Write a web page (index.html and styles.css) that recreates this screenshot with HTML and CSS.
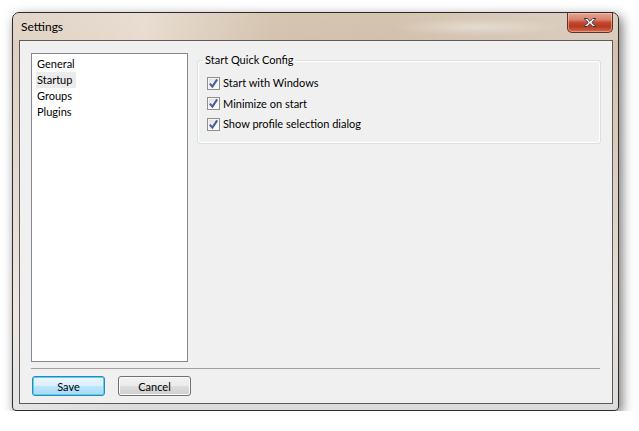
FILE: index.html
```html
<!DOCTYPE html>
<html>
<head>
<meta charset="utf-8">
<link rel="stylesheet" href="styles.css">
</head>
<body>
<div class="window">
  <div class="titlebar">
    <span class="title">Settings</span>
    <span class="wm-title" aria-hidden="true"></span>
    <button class="close" aria-label="Close">
      <svg width="16" height="11" viewBox="0 0 16 11"><path d="M2 1.5h3.2L8 4.3 10.8 1.5H14L9.8 5.5 14 9.5h-3.2L8 6.7 5.2 9.5H2l4.2-4z" fill="#fff" stroke="#3a3a44" stroke-width="1" stroke-linejoin="round"/></svg>
    </button>
  </div>
  <div class="client">
    <div class="main">
      <ul class="list">
        <li><span>General</span></li>
        <li class="sel"><span>Startup</span></li>
        <li><span>Groups</span></li>
        <li><span>Plugins</span></li>
      </ul>
      <div class="pane">
        <fieldset class="group">
          <legend>Start Quick Config</legend>
          <label class="check"><span class="box"><svg width="11" height="11" viewBox="0 0 11 11"><path d="M1.8 5.6l2.6 3L9.2 1.4" fill="none" stroke="#4a5d9c" stroke-width="2.1"/></svg></span>Start with Windows</label>
          <label class="check"><span class="box"><svg width="11" height="11" viewBox="0 0 11 11"><path d="M1.8 5.6l2.6 3L9.2 1.4" fill="none" stroke="#4a5d9c" stroke-width="2.1"/></svg></span>Minimize on start</label>
          <label class="check"><span class="box"><svg width="11" height="11" viewBox="0 0 11 11"><path d="M1.8 5.6l2.6 3L9.2 1.4" fill="none" stroke="#4a5d9c" stroke-width="2.1"/></svg></span>Show profile selection dialog</label>
        </fieldset>
      </div>
    </div>
    <div class="sep"></div>
    <div class="buttons">
      <button class="btn default">Save</button>
      <button class="btn">Cancel</button>
    </div>
  </div>
</div>
</body>
</html>
```
FILE: styles.css
```css
html, body {
  margin: 0;
  padding: 0;
  background: #ffffff;
}
body {
  padding: 12px 0 0 12px;
  font-family: "Lato", "Noto Sans", sans-serif;
  font-size: 11px;
  color: #000;
}
.window {
  position: relative;
  width: 605px;
  height: 397px;
  border: 1px solid #2e2b28;
  border-radius: 7px 7px 4px 4px;
  background:
    linear-gradient(to right, rgba(255,255,255,0.25) 0, rgba(255,255,255,0) 120px, rgba(255,255,255,0) 100%),
    linear-gradient(to bottom, #d6c6b4 0, #d3c1ac 30px, #d9cdbf 150px, #e4dfda 300px, #dcdcdc 100%);
  box-shadow: 3px 4px 12px rgba(0,0,0,0.55);
  display: flex;
  flex-direction: column;
}
.titlebar {
  position: relative;
  height: 27px;
  display: flex;
  align-items: flex-start;
  justify-content: space-between;
  padding: 0 5px 0 8px;
  background: linear-gradient(to right, rgba(225,215,203,0.5) 0, rgba(240,232,222,0.7) 130px, rgba(214,196,176,0.3) 260px, rgba(206,188,166,0.2) 380px, rgba(226,218,210,0.4) 560px);
  border-radius: 6px 6px 0 0;
}
.title {
  margin-top: 6px;
  font-size: 12px;
  line-height: 16px;
}
.wm-title {
  position: absolute;
  left: 380px;
  top: 5px;
  width: 170px;
  height: 18px;
  background: radial-gradient(ellipse at center, rgba(235,228,220,0.7) 0, rgba(235,228,220,0) 70%);
}
.close {
  position: relative;
  margin-top: -1px;
  width: 46px;
  height: 21px;
  padding: 0;
  border: 1px solid #5b3128;
  border-top-color: #3a2a24;
  border-radius: 0 0 5px 5px;
  background: linear-gradient(to bottom, #e7a595 0, #d8816d 35%, #c14a33 50%, #b9381f 70%, #d26a4d 100%);
  box-shadow: inset 0 0 0 1px rgba(255,220,210,0.45);
  display: flex;
  align-items: center;
  justify-content: center;
}
.client {
  margin: 0 5px 6px 6px;
  flex: 1;
  border: 1px solid #5f5a55;
  background: #f0f0f0;
  padding: 12px 11px 6px 11px;
  display: flex;
  flex-direction: column;
}
.main {
  display: flex;
  gap: 9px;
}
.list {
  margin: 0;
  padding: 2px 0 0 4px;
  list-style: none;
  width: 151px;
  height: 305px;
  border: 1px solid #828790;
  background: #fff;
}
.list li {
  height: 16px;
  line-height: 16px;
}
.list li span {
  display: inline-block;
  padding: 0 1px;
}
.list li.sel span {
  background: #ebebeb;
  padding-right: 4px;
}
.pane {
  position: relative;
  flex: 1;
}
.group {
  margin: 0;
  padding: 6px 0 8px 0;
  border: 1px solid #d5dfe5;
  border-radius: 3px;
  box-shadow: inset 0 0 0 1px #fff;
  width: 404px;
  box-sizing: border-box;
  min-width: 0;
}
.group legend {
  margin-left: 5px;
  padding: 0 2px;
  line-height: 14px;
  font-size: 11px;
}
.check {
  display: flex;
  align-items: center;
  height: 20.5px;
  line-height: 16px;
  margin-left: 9px;
}
.box {
  width: 11px;
  height: 11px;
  margin-right: 3px;
  border: 1px solid #8e8f8f;
  background: linear-gradient(135deg, #dcdcdc 0, #f4f4f4 60%, #ffffff 100%);
  box-shadow: inset 0 0 0 1px #f6f6f6;
  display: flex;
  align-items: center;
  justify-content: center;
}
.box svg {
  display: block;
}
.sep {
  margin-top: 6px;
  height: 1px;
  width: 569px;
  background: #a0a0a0;
}
.buttons {
  margin-top: 7px;
  display: flex;
  gap: 13px;
  padding-left: 1px;
}
.btn {
  width: 73px;
  height: 20px;
  padding: 0;
  font-family: "Lato", "Noto Sans", sans-serif;
  font-size: 11px;
  color: #000;
  border: 1px solid #707070;
  border-radius: 3px;
  background: linear-gradient(to bottom, #f2f2f2 0, #ebebeb 50%, #dddddd 50%, #cfcfcf 100%);
  box-shadow: inset 0 0 0 1px #fbfbfb;
}
.btn.default {
  border-color: #3c7fb1;
  background: linear-gradient(to bottom, #eaf6fd 0, #d9f0fc 50%, #bee6fd 50%, #a7d9f5 100%);
  box-shadow: inset 0 0 0 1px #48d8fb;
}
```
